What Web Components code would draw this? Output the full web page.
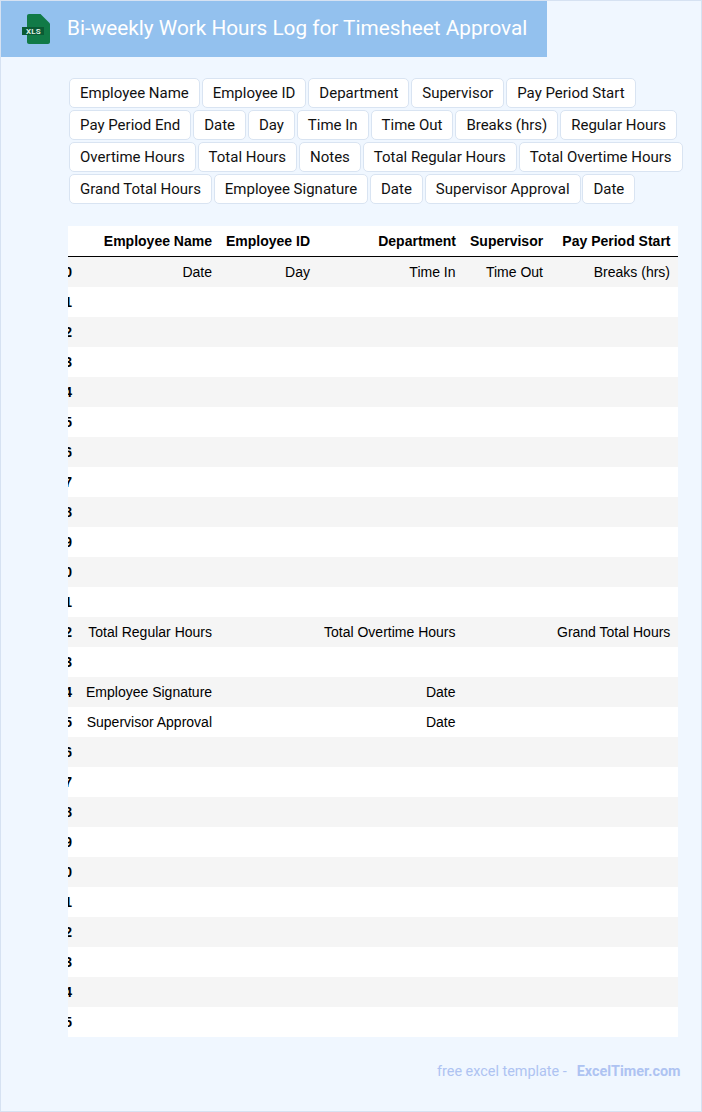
<!DOCTYPE html>
<html lang="en">
<head>
<meta charset="utf-8">
<title>Bi-weekly Work Hours Log for Timesheet Approval</title>
<style>
  html, body { margin: 0; padding: 0; }
</style>
</head>
<body>
<sheet-page>
  <title-bar slot="title">Bi-weekly Work Hours Log for Timesheet Approval</title-bar>
  <tag-list slot="tags"></tag-list>
  <hours-table slot="table"></hours-table>
  <page-footer slot="footer"></page-footer>
</sheet-page>

<script>
const TAGS = [
  'Employee Name', 'Employee ID', 'Department', 'Supervisor', 'Pay Period Start',
  'Pay Period End', 'Date', 'Day', 'Time In', 'Time Out', 'Breaks (hrs)', 'Regular Hours',
  'Overtime Hours', 'Total Hours', 'Notes', 'Total Regular Hours', 'Total Overtime Hours',
  'Grand Total Hours', 'Employee Signature', 'Date', 'Supervisor Approval', 'Date'
];

const HEAD = ['Employee Name', 'Employee ID', 'Department', 'Supervisor', 'Pay Period Start'];

// rows that hold text, keyed by index, the rest are blank
const FILLED = {
  10: ['Date', 'Day', 'Time In', 'Time Out', 'Breaks (hrs)'],
  22: ['Total Regular Hours', '', 'Total Overtime Hours', '', 'Grand Total Hours'],
  24: ['Employee Signature', '', 'Date', '', ''],
  25: ['Supervisor Approval', '', 'Date', '', '']
};

class SheetPage extends HTMLElement {
  constructor() {
    super();
    this.attachShadow({ mode: 'open' });
    this.shadowRoot.innerHTML = `
      <style>
        :host {
          display: block;
          box-sizing: border-box;
          width: 702px;
          height: 1112px;
          border: 1px solid #d6e2f2;
          background: #f0f7ff;
        }
        .body {
          display: flex;
          flex-direction: column;
          padding: 21px 18px 0 67px;
        }
      </style>
      <slot name="title"></slot>
      <div class="body">
        <slot name="tags"></slot>
        <slot name="table"></slot>
        <slot name="footer"></slot>
      </div>
    `;
  }
}

class TitleBar extends HTMLElement {
  constructor() {
    super();
    this.attachShadow({ mode: 'open' });
    this.shadowRoot.innerHTML = `
      <style>
        :host {
          display: flex;
          align-items: center;
          gap: 16px;
          box-sizing: border-box;
          width: 546px;
          height: 56px;
          padding-left: 21px;
          background: #93c1ee;
          color: #fff;
          font: 400 20.760px Roboto, sans-serif;
        }
        svg { flex-shrink: 0; display: block; }
        span { margin-top: -3px; }
        text { font: 700 8px Roboto, sans-serif; letter-spacing: .2px; fill: #dcefe4; }
      </style>
      <svg width="29" height="32" viewBox="0 0 29 32">
        <path d="M5 3C5 1.900 5.900 1 7 1h11.500L28 10.500V29c0 1.100-.9 2-2 2H7c-1.100 0-2-.9-2-2z" fill="#117a47"/>
        <rect x="0" y="14" width="22" height="8" fill="#0a5a34"/>
        <text x="4" y="21">XLS</text>
      </svg>
      <span><slot></slot></span>
    `;
  }
}

class TagList extends HTMLElement {
  constructor() {
    super();
    this.attachShadow({ mode: 'open' });
    const chips = TAGS.map(t => `<span class="tag">${t}</span>`).join('');
    this.shadowRoot.innerHTML = `
      <style>
        :host {
          display: flex;
          flex-wrap: wrap;
          gap: 2px 1.900px;
          margin-left: 1px;
          width: 616px;
        }
        .tag {
          box-sizing: border-box;
          height: 30px;
          padding: 0 10px;
          border: 1px solid #d9e4f2;
          border-radius: 5px;
          background: #fff;
          color: #111;
          font: 400 15px/28px Roboto, sans-serif;
          white-space: nowrap;
        }
      </style>
      ${chips}
    `;
  }
}

class HoursTable extends HTMLElement {
  constructor() {
    super();
    this.attachShadow({ mode: 'open' });
    let rows = '';
    for (let i = 10; i <= 35; i++) {
      const cells = FILLED[i] || ['', '', '', '', ''];
      rows += `<tr><th>${i}</th>${cells.map(c => `<td>${c}</td>`).join('')}</tr>`;
    }
    this.shadowRoot.innerHTML = `
      <style>
        :host {
          display: block;
          margin-top: 22px;
          width: 610px;
          overflow: hidden;
          background: #fff;
        }
        table {
          border-collapse: separate;
          border-spacing: 0;
          table-layout: fixed;
          /* index column is scrolled partly out of view */
          margin-left: -32px;
          width: 642px;
          color: #000;
          font: 400 14px "Liberation Sans", Arial, sans-serif;
        }
        th, td {
          box-sizing: border-box;
          height: 30px;
          padding: 0 7px;
          text-align: right;
          white-space: nowrap;
          overflow: hidden;
        }
        th { font-weight: 700; }
        td:nth-child(4) { padding-right: 7.500px; }
        td:last-child { padding-right: 8px; }
        thead th:last-child { padding-right: 7.500px; }
        thead th { height: 31px; border-bottom: 1px solid #000; }
        tbody tr:nth-child(odd) { background: #f5f5f5; }
      </style>
      <table>
        <colgroup>
          <col style="width:43px"><col style="width:140px"><col style="width:98px">
          <col style="width:146px"><col style="width:87px"><col style="width:128px">
        </colgroup>
        <thead>
          <tr><th></th>${HEAD.map(h => `<th>${h}</th>`).join('')}</tr>
        </thead>
        <tbody>${rows}</tbody>
      </table>
    `;
  }
}

class PageFooter extends HTMLElement {
  constructor() {
    super();
    this.attachShadow({ mode: 'open' });
    this.shadowRoot.innerHTML = `
      <style>
        :host {
          display: flex;
          justify-content: flex-end;
          gap: 10px;
          margin-top: 26px;
          margin-right: 2.500px;
          color: #aec3f2;
          font: 400 14.400px/18px Roboto, sans-serif;
        }
        b { font-weight: 700; }
      </style>
      <span>free excel template -</span>
      <b>ExcelTimer.com</b>
    `;
  }
}

customElements.define('sheet-page', SheetPage);
customElements.define('title-bar', TitleBar);
customElements.define('tag-list', TagList);
customElements.define('hours-table', HoursTable);
customElements.define('page-footer', PageFooter);
</script>
</body>
</html>
